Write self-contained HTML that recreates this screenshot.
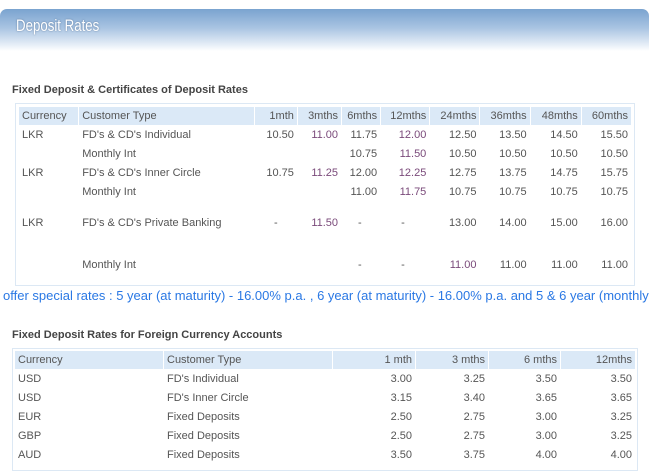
<!DOCTYPE html>
<html><head><meta charset="utf-8"><style>
*{margin:0;padding:0;box-sizing:border-box}
body{width:659px;height:474px;background:#fff;position:relative;overflow:hidden;font-family:"Liberation Sans",Arial,sans-serif;font-size:11px;color:#555}
.hdr{position:absolute;left:0;top:9px;width:649px;height:42px;border-radius:7px 7px 0 0;background:linear-gradient(#7aa3cf 0%,#a9c4e2 45%,#e6eef7 85%,#fff 100%)}
.hdr span{position:absolute;left:16px;top:7px;color:#fff;font-size:17px;transform:scaleX(.78);transform-origin:left;text-shadow:0 0 2px rgba(40,70,110,.6)}
h3{position:absolute;font-size:11px;font-weight:bold;color:#444}
.box{position:absolute;border:1px solid #dce8f4}
table{position:absolute;border-collapse:separate;border-spacing:1px;table-layout:fixed}
td{padding:0 3px;height:18px;white-space:nowrap}
tr.h td{background:#dbe9f7;color:#555}
.r{text-align:right}
.p{color:#7a4a7a}
.note{position:absolute;left:3px;top:288px;color:#2a78e4;font-size:13px;white-space:nowrap}
</style></head><body>
<div class="hdr"><span>Deposit Rates</span></div>
<h3 style="left:12px;top:84px">Fixed Deposit &amp; Certificates of Deposit Rates</h3>
<div class="box" style="left:15px;top:103px;width:620px;height:183px"></div>
<table style="left:18px;top:106px;width:614px">
<colgroup><col style="width:59px"><col style="width:174px"><col style="width:42px"><col style="width:43px"><col style="width:38px"><col style="width:48px"><col style="width:49px"><col style="width:49px"><col style="width:50px"><col style="width:49px"></colgroup>
<tr class="h"><td>Currency</td><td>Customer Type</td><td class="r">1mth</td><td class="r">3mths</td><td class="r">6mths</td><td class="r">12mths</td><td class="r">24mths</td><td class="r">36mths</td><td class="r">48mths</td><td class="r">60mths</td></tr>
<tr><td>LKR</td><td>FD's &amp; CD's Individual</td><td class="r">10.50</td><td class="r p">11.00</td><td class="r">11.75</td><td class="r p">12.00</td><td class="r">12.50</td><td class="r">13.50</td><td class="r">14.50</td><td class="r">15.50</td></tr>
<tr><td></td><td>Monthly Int</td><td></td><td></td><td class="r">10.75</td><td class="r p">11.50</td><td class="r">10.50</td><td class="r">10.50</td><td class="r">10.50</td><td class="r">10.50</td></tr>
<tr><td>LKR</td><td>FD's &amp; CD's Inner Circle</td><td class="r">10.75</td><td class="r p">11.25</td><td class="r">12.00</td><td class="r p">12.25</td><td class="r">12.75</td><td class="r">13.75</td><td class="r">14.75</td><td class="r">15.75</td></tr>
<tr><td></td><td>Monthly Int</td><td></td><td></td><td class="r">11.00</td><td class="r p">11.75</td><td class="r">10.75</td><td class="r">10.75</td><td class="r">10.75</td><td class="r">10.75</td></tr>
<tr><td style="height:42px">LKR</td><td>FD's &amp; CD's Private Banking</td><td style="text-align:center">-</td><td class="r p">11.50</td><td style="padding-left:16px">-</td><td style="padding-left:20px">-</td><td class="r">13.00</td><td class="r">14.00</td><td class="r">15.00</td><td class="r">16.00</td></tr>
<tr><td style="height:39px"></td><td>Monthly Int</td><td></td><td></td><td style="padding-left:16px">-</td><td style="padding-left:20px">-</td><td class="r p">11.00</td><td class="r">11.00</td><td class="r">11.00</td><td class="r">11.00</td></tr>
</table>
<div class="note">offer special rates : 5 year (at maturity) - 16.00% p.a. , 6 year (at maturity) - 16.00% p.a. and 5 &amp; 6 year (monthly</div>
<h3 style="left:12px;top:329px">Fixed Deposit Rates for Foreign Currency Accounts</h3>
<div class="box" style="left:12px;top:348px;width:626px;height:123px"></div>
<table style="left:14px;top:350px;width:622px">
<colgroup><col style="width:148px"><col style="width:168px"><col style="width:82px"><col style="width:72px"><col style="width:71px"><col style="width:74px"></colgroup>
<tr class="h"><td>Currency</td><td>Customer Type</td><td class="r">1 mth</td><td class="r">3 mths</td><td class="r">6 mths</td><td class="r">12mths</td></tr>
<tr><td>USD</td><td>FD's Individual</td><td class="r">3.00</td><td class="r">3.25</td><td class="r">3.50</td><td class="r">3.50</td></tr>
<tr><td>USD</td><td>FD's Inner Circle</td><td class="r">3.15</td><td class="r">3.40</td><td class="r">3.65</td><td class="r">3.65</td></tr>
<tr><td>EUR</td><td>Fixed Deposits</td><td class="r">2.50</td><td class="r">2.75</td><td class="r">3.00</td><td class="r">3.25</td></tr>
<tr><td>GBP</td><td>Fixed Deposits</td><td class="r">2.50</td><td class="r">2.75</td><td class="r">3.00</td><td class="r">3.25</td></tr>
<tr><td>AUD</td><td>Fixed Deposits</td><td class="r">3.50</td><td class="r">3.75</td><td class="r">4.00</td><td class="r">4.00</td></tr>
</table>
</body></html>
